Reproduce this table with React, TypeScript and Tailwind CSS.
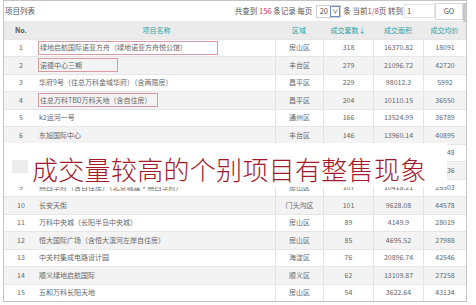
/**
 * 项目列表 - transaction ranking table with an overlay caption
 */

const rows = [
  { no: 1, name: '绿地启航国际诺亚方舟（绿地诺亚方舟悦公馆）', area: '房山区', count: '318', size: '16370.82', price: '18091', box: 'w-[180px]' },
  { no: 2, name: '诺德中心三期', area: '丰台区', count: '279', size: '21096.72', price: '42720', box: 'w-[80px]' },
  { no: 3, name: '华府9号（住总万科金域华府）（含两限房）', area: '昌平区', count: '229', size: '98012.3', price: '5992' },
  { no: 4, name: '住总万科TBD万科天地（含自住房）', area: '昌平区', count: '204', size: '10110.15', price: '36550', box: 'w-[120px]' },
  { no: 5, name: 'k2运河一号', area: '通州区', count: '166', size: '13524.99', price: '36789' },
  { no: 6, name: '东旭国际中心', area: '丰台区', count: '146', size: '13960.14', price: '40895' },
  // rows 7 and 8 sit under the caption; only the price tails peek out
  { no: 7, name: '', area: '', count: '', size: '', price: '91248', hidden: true },
  { no: 8, name: '', area: '', count: '', size: '', price: '34536', hidden: true },
  { no: 9, name: '燕西华府（含自住房）（北京城建·燕西华府）', area: '房山区', count: '107', size: '10418.21', price: '25503' },
  { no: 10, name: '长安天街', area: '门头沟区', count: '101', size: '9628.08', price: '44578' },
  { no: 11, name: '万科中央城（长阳半岛中央城）', area: '房山区', count: '89', size: '4149.9', price: '28019' },
  { no: 12, name: '恒大国际广场（含恒大滨河左岸自住房）', area: '房山区', count: '85', size: '4695.52', price: '27988' },
  { no: 13, name: '中关村集成电路设计园', area: '海淀区', count: '76', size: '20896.74', price: '42546' },
  { no: 14, name: '顺义绿地启航国际', area: '顺义区', count: '62', size: '13109.87', price: '27258' },
  { no: 15, name: '五和万科长阳天地', area: '房山区', count: '54', size: '3622.64', price: '43134' },
]

const cols = 'grid grid-cols-[34px_237px_48px_50px_50px_43px]'

export default function App() {
  return (
    <div className="relative w-[476px] h-[305px] overflow-hidden bg-white font-['Noto_Sans_CJK_SC','Noto_Sans',sans-serif] text-[#666]">
      {/* Frame */}
      <div className="ml-[3px] w-[464px] border border-[#c4c4c4]">
        {/* Top bar */}
        <div className="flex h-[20px] items-center justify-between pl-[1px] pr-[3px] text-[7.5px] text-[#555]">
          <span>项目列表</span>
          <div className="flex items-center">
            <span>
              共查到 <span className="text-[#d0343f]">156</span> 条记录 每页
            </span>
            <div className="ml-[4px] flex h-[13px] w-[25px] items-center border border-[#cfcfcf] bg-white">
              <span className="w-[13px] text-center">20</span>
              <span className="flex h-[11px] w-[10px] items-center justify-center border border-[#6a8fc8] text-[6px] leading-none text-[#333]">
                ∨
              </span>
            </div>
            <span className="ml-[2px]">
              条 当前<span className="text-[#d0343f]">1/8</span>页 转到
            </span>
            <div className="ml-[1px] flex h-[14px] w-[31px] items-center border border-[#e4e4e4] pl-[2px]">1</div>
            <div className="flex h-[17px] w-[28px] items-center justify-center border border-[#d8d8d8] bg-white text-[7.5px] text-[#555]">
              GO
            </div>
          </div>
        </div>

        {/* Header */}
        <div className={`${cols} h-[17.5px] items-center bg-[#ebebeb] text-[7px] text-[#2aa3a6]`}>
          <span className="text-center font-bold text-[#555]">No.</span>
          <span className="text-center">项目名称</span>
          <span className="text-center">区域</span>
          <span className="text-center">成交套数↓</span>
          <span className="text-center">成交面积</span>
          <span className="text-center">成交均价</span>
        </div>

        {/* Body */}
        {rows.map((r) => (
          <div
            key={r.no}
            className={`${cols} h-[17.5px] border-t border-[#e6e6e6] text-[7px] leading-none ${r.no % 2 === 0 ? 'bg-[#f3f3f3]' : 'bg-white'}`}
          >
            <span className="flex items-center justify-center">{r.hidden ? '' : r.no}</span>
            <span className="flex items-center pl-[1px]">
              {r.box ? (
                <span className={`${r.box} -ml-[1px] flex h-[14px] items-center border border-[#d99aa4] pl-[1px]`}>{r.name}</span>
              ) : (
                r.name
              )}
            </span>
            <span className="flex items-center justify-center border-l border-[#e3e3e3]">{r.area}</span>
            <span className="flex items-center justify-center border-l border-[#e3e3e3]">{r.count}</span>
            <span className="flex items-center justify-center border-l border-[#e3e3e3]">{r.size}</span>
            <span className="flex items-center justify-center border-l border-[#e3e3e3]">{r.price}</span>
          </div>
        ))}
      </div>

      {/* Scrollbar thumb */}
      <div className="absolute left-[463px] top-[3px] h-[19px] w-[4px] bg-[#c8c8c8]" />

      {/* Overlay caption */}
      <div className="absolute left-[4px] top-[143px] h-[44px] w-[443px] bg-white">
        <div className="absolute left-[8px] top-[17px] h-[13px] w-[16px] bg-[#ececec]" />
        <div className="relative whitespace-nowrap pl-[28px] pt-[13px] text-[26px] font-light leading-[26px] tracking-[0.3px] text-[#a3192b]">
          成交量较高的个别项目有整售现象
        </div>
      </div>
    </div>
  )
}
